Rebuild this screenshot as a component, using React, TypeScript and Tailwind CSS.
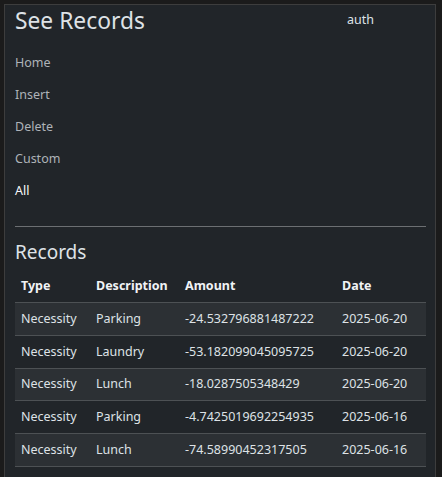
import React from "react";

const rows = [
  ["Necessity", "Parking", "-24.532796881487222", "2025-06-20"],
  ["Necessity", "Laundry", "-53.182099045095725", "2025-06-20"],
  ["Necessity", "Lunch", "-18.0287505348429", "2025-06-20"],
  ["Necessity", "Parking", "-4.7425019692254935", "2025-06-16"],
  ["Necessity", "Lunch", "-74.58990452317505", "2025-06-16"],
];

export default function App() {
  return (
    <div
      className="min-h-[477px] w-[442px] bg-[#1b1b1b] pl-[4px] pt-[4px]"
      style={{ fontFamily: '"Noto Sans", "Open Sans", sans-serif' }}
    >
      <div className="w-[432px] min-h-[473px] border-l border-t border-r border-[#3d3d3d] bg-[#212529] pl-[10px] pr-[9px] text-[#dee2e6]">
        <div className="grid grid-cols-[332px_1fr]">
          <h1 className="text-[22.8px] leading-[30px] mt-[1px] text-[#dee2e6]">See Records</h1>
          <div className="text-[12.5px] leading-[20px] mt-[5px] text-[#dee2e6]">auth</div>
        </div>
        <nav className="mt-[17px] flex flex-col gap-[12px] text-[12.5px] leading-[20px]">
          <a className="text-[#aeb3b8]">Home</a>
          <a className="text-[#aeb3b8]">Insert</a>
          <a className="text-[#aeb3b8]">Delete</a>
          <a className="text-[#aeb3b8]">Custom</a>
          <a className="text-[#f8f9fa]">All</a>
        </nav>
        <hr className="mt-[25px] border-t border-[#6c6f72]" />
        <h2 className="mt-[13px] text-[19px] leading-[24px] text-[#dee2e6]">Records</h2>
        <table className="mt-[6px] w-full table-fixed text-[12.5px] leading-[20px] border-collapse">
          <colgroup>
            <col className="w-[75px]" />
            <col className="w-[89px]" />
            <col className="w-[157px]" />
            <col className="w-[90px]" />
          </colgroup>
          <thead>
            <tr className="border-b border-[#4d5154]">
              <th className="text-left font-bold text-[#f1f3f5] px-[6px] py-[6px]">Type</th>
              <th className="text-left font-bold text-[#f1f3f5] px-[6px] py-[6px]">Description</th>
              <th className="text-left font-bold text-[#f1f3f5] px-[6px] py-[6px]">Amount</th>
              <th className="text-left font-bold text-[#f1f3f5] px-[6px] py-[6px]">Date</th>
            </tr>
          </thead>
          <tbody>
            {rows.map((r, i) => (
              <tr
                key={i}
                className={`border-b border-[#4d5154] ${i % 2 === 0 ? "bg-[#2c3034]" : "bg-[#212529]"}`}
              >
                {r.map((c, j) => (
                  <td key={j} className="px-[6px] py-[5.875px] text-[#dee2e6] whitespace-nowrap">
                    {c}
                  </td>
                ))}
              </tr>
            ))}
          </tbody>
        </table>
      </div>
    </div>
  );
}
